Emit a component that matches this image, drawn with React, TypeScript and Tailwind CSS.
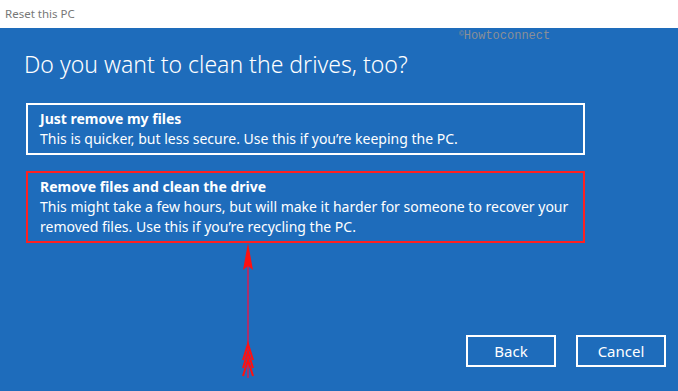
import React from "react";

function Arrow() {
  return (
    <svg
      className="absolute left-[236px] top-[242px]"
      width="24"
      height="140"
      viewBox="0 0 24 140"
    >
      <line x1="12" y1="20" x2="12" y2="136" stroke="#a8306c" strokeWidth="2" />
      <polygon points="12,1 7,28 12,24 17,28" fill="#ff1010" />
      <polyline points="7,118 12,102 17,118" fill="none" stroke="#ff1010" strokeWidth="2" />
      <polyline points="7,126 12,110 17,126" fill="none" stroke="#ff1010" strokeWidth="2" />
      <polyline points="7,134 12,118 17,134" fill="none" stroke="#ff1010" strokeWidth="2" />
    </svg>
  );
}

export default function App() {
  const font = { fontFamily: '"Segoe UI", "Noto Sans", "Open Sans", sans-serif' };
  return (
    <div className="w-[678px] h-[391px] overflow-hidden flex flex-col relative" style={font}>
      <div className="h-[28px] bg-white flex items-start pl-[5px] pt-[5px] text-[11.5px] text-[#777]">
        Reset this PC
      </div>
      <div className="flex-1 bg-[#1e6cbb] flex flex-col pl-[26px] pr-[12px] relative">
        <div
          className="absolute left-[459px] top-[2px] text-[12px] text-[#8b8f96] leading-none"
          style={{ fontFamily: '"Liberation Mono", monospace' }}
        >
          <span className="text-[8px] align-top">©</span>Howtoconnect
        </div>
        <div className="text-[23px] font-light text-white leading-[32px] mt-[20px] -ml-[2px]">
          Do you want to clean the drives, too?
        </div>
        <div className="mt-[23px] w-[559px] border-2 border-white px-[12px] py-[4px] text-[14px] leading-[20px] text-white">
          <div className="font-bold">Just remove my files</div>
          <div>This is quicker, but less secure. Use this if you’re keeping the PC.</div>
        </div>
        <div className="mt-[16px] w-[559px] border-2 border-[#ff2020] px-[12px] py-[4px] text-[14px] leading-[20px] text-white">
          <div className="font-bold">Remove files and clean the drive</div>
          <div>
            This might take a few hours, but will make it harder for someone to recover your
            removed files. Use this if you’re recycling the PC.
          </div>
        </div>
        <div className="flex-1" />
        <div className="flex justify-end gap-[20px] mb-[24px]">
          <button className="w-[90px] h-[32px] border-2 border-white text-white text-[15px]">Back</button>
          <button className="w-[90px] h-[32px] border-2 border-white text-white text-[15px]">Cancel</button>
        </div>
      </div>
      <Arrow />
    </div>
  );
}
